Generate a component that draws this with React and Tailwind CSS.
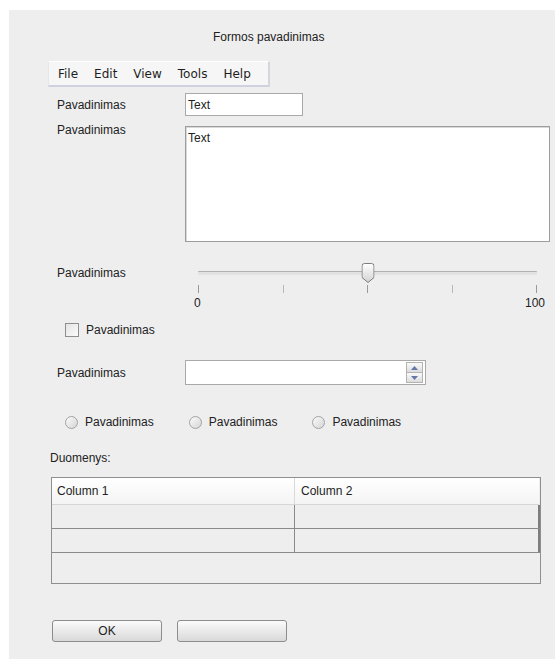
import React from "react";

const sans = { fontFamily: '"Liberation Sans", Arial, sans-serif' };

const Label = ({ children, className = "" }) => (
  <span className={"block text-[12px] leading-[14px] text-[#222] " + className} style={sans}>
    {children}
  </span>
);

const SliderThumb = () => (
  <svg width="13" height="20" viewBox="0 0 13 20" className="absolute left-1/2 top-0 -translate-x-1/2">
    <defs>
      <linearGradient id="thumbFill" x1="0" y1="0" x2="0" y2="1">
        <stop offset="0" stopColor="#ffffff" />
        <stop offset="1" stopColor="#d2d2d2" />
      </linearGradient>
    </defs>
    <path
      d="M0.5 3 Q0.5 0.5 3 0.5 L10 0.5 Q12.5 0.5 12.5 3 L12.5 14.5 L6.5 19.5 L0.5 14.5 Z"
      fill="url(#thumbFill)"
      stroke="#7c7c7c"
    />
  </svg>
);

const Arrow = ({ up }) => (
  <svg width="7" height="4" viewBox="0 0 7 4">
    <path d={up ? "M0 4 L3.5 0 L7 4 Z" : "M0 0 L3.5 4 L7 0 Z"} fill="#6577a8" />
  </svg>
);

const Radio = ({ children }) => (
  <div className="flex items-center gap-[7px]">
    <span className="h-[13px] w-[13px] rounded-full border border-[#a3a3a3] bg-gradient-to-br from-[#fafafa] to-[#d6d6d6]" />
    <Label>{children}</Label>
  </div>
);

const Button = ({ children }) => (
  <button
    className="h-[22px] w-[110px] rounded-[3px] border border-[#8d8d8d] bg-gradient-to-b from-[#fbfbfb] to-[#d9d9d9] text-[12px] leading-[14px] text-[#222]"
    style={sans}
  >
    {children}
  </button>
);

export default function App() {
  const menu = ["File", "Edit", "View", "Tools", "Help"];

  return (
    <div className="min-h-[659px] bg-white pl-[9px] pt-[10px]">
      <div className="flex h-[649px] flex-col bg-[#eeeeee]">
        {/* window title */}
        <div className="mt-[20px] pl-[204px]">
          <Label>Formos pavadinimas</Label>
        </div>

        {/* menu bar */}
        <div
          className="ml-[39px] mt-[17px] flex h-[26px] w-[222px] items-center border-b-2 border-r-2 border-t border-l border-b-[#cdd2de] border-r-[#d3d6de] border-t-white border-l-[#e4e6ec] bg-[#f6f6f6] pl-[1px]"
          style={{ fontFamily: '"DejaVu Sans", sans-serif' }}
        >
          {menu.map((m) => (
            <span key={m} className="px-[8px] text-[12px] leading-[14px] text-[#1e1e1e]">
              {m}
            </span>
          ))}
        </div>

        {/* text field */}
        <div className="ml-[48px] mt-[6px] flex items-center">
          <Label className="w-[128px]">Pavadinimas</Label>
          <div className="flex h-[23px] w-[118px] items-center border border-[#a9a9a9] bg-white pl-[2px]">
            <Label>Text</Label>
          </div>
        </div>

        {/* text area */}
        <div className="ml-[48px] mt-[10px] flex items-start">
          <Label className="-mt-[3px] w-[128px]">Pavadinimas</Label>
          <div className="h-[116px] w-[365px] border border-[#9d9d9d] bg-white pl-[2px] pt-[4px] shadow-[inset_1px_1px_0_#d8d8d8]">
            <Label>Text</Label>
          </div>
        </div>

        {/* slider */}
        <div className="ml-[48px] mt-[21px] flex items-start">
          <Label className="mt-[3px] w-[128px]">Pavadinimas</Label>
          <div className="w-[365px]">
            <div className="px-[13px]">
              <div className="relative h-[20px]">
                <div className="absolute inset-x-0 top-[8px] h-[4px] rounded-[1px] border-t border-[#b0b0b0] bg-[#e2e2e2]" />
                <SliderThumb />
              </div>
              <div className="mt-[2px] flex h-[8px] justify-between">
                <span className="w-px bg-[#9a9a9a]" />
                <span className="w-px bg-[#b8b8b8]" />
                <span className="w-px bg-[#9a9a9a]" />
                <span className="w-px bg-[#b8b8b8]" />
                <span className="w-px bg-[#9a9a9a]" />
              </div>
            </div>
            <div className="ml-[9px] mr-[5px] mt-[3px] flex justify-between">
              <Label>0</Label>
              <Label>100</Label>
            </div>
          </div>
        </div>

        {/* checkbox */}
        <div className="ml-[56px] mt-[13px] flex items-center gap-[7px]">
          <span className="h-[14px] w-[14px] border border-[#8e8e8e] bg-gradient-to-br from-[#e4e4e4] to-[#fbfbfb]" />
          <Label>Pavadinimas</Label>
        </div>

        {/* spinner */}
        <div className="ml-[48px] mt-[23px] flex items-center">
          <Label className="w-[128px]">Pavadinimas</Label>
          <div className="flex h-[25px] w-[241px] items-center justify-end border border-[#a9a9a9] bg-white pr-[2px]">
            <div className="flex h-[21px] w-[17px] flex-col">
              <div className="flex flex-1 items-center justify-center border border-[#b3b3b3] bg-gradient-to-b from-[#fafafa] to-[#dcdcdc]">
                <Arrow up />
              </div>
              <div className="flex flex-1 items-center justify-center border border-t-0 border-[#b3b3b3] bg-gradient-to-b from-[#fafafa] to-[#dcdcdc]">
                <Arrow />
              </div>
            </div>
          </div>
        </div>

        {/* radio group */}
        <div className="ml-[56px] mt-[30px] flex items-center gap-[35px]">
          <Radio>Pavadinimas</Radio>
          <Radio>Pavadinimas</Radio>
          <Radio>Pavadinimas</Radio>
        </div>

        <div className="ml-[41px] mt-[22px]">
          <Label>Duomenys:</Label>
        </div>

        {/* table */}
        <div className="ml-[42px] mt-[12px] h-[107px] w-[490px] border border-[#8f8f8f]">
          <div className="flex h-[27px] w-[487px] border-b border-[#d6d6d6] bg-gradient-to-b from-white to-[#f4f4f4]">
            <div className="flex w-[243px] items-center border-r border-[#dadada] pl-[5px]">
              <Label>Column 1</Label>
            </div>
            <div className="flex flex-1 items-center pl-[6px]">
              <Label>Column 2</Label>
            </div>
          </div>
          {[0, 1].map((r) => (
            <div key={r} className="flex h-[24px] border-b border-[#8a8a8a]">
              <div className="w-[243px] border-r border-[#8a8a8a]" />
              <div className="w-[245px] border-r-2 border-[#7d7d7d]" />
            </div>
          ))}
        </div>

        {/* buttons */}
        <div className="ml-[43px] mt-[36px] flex gap-[15px]">
          <Button>OK</Button>
          <Button></Button>
        </div>
      </div>
    </div>
  );
}
